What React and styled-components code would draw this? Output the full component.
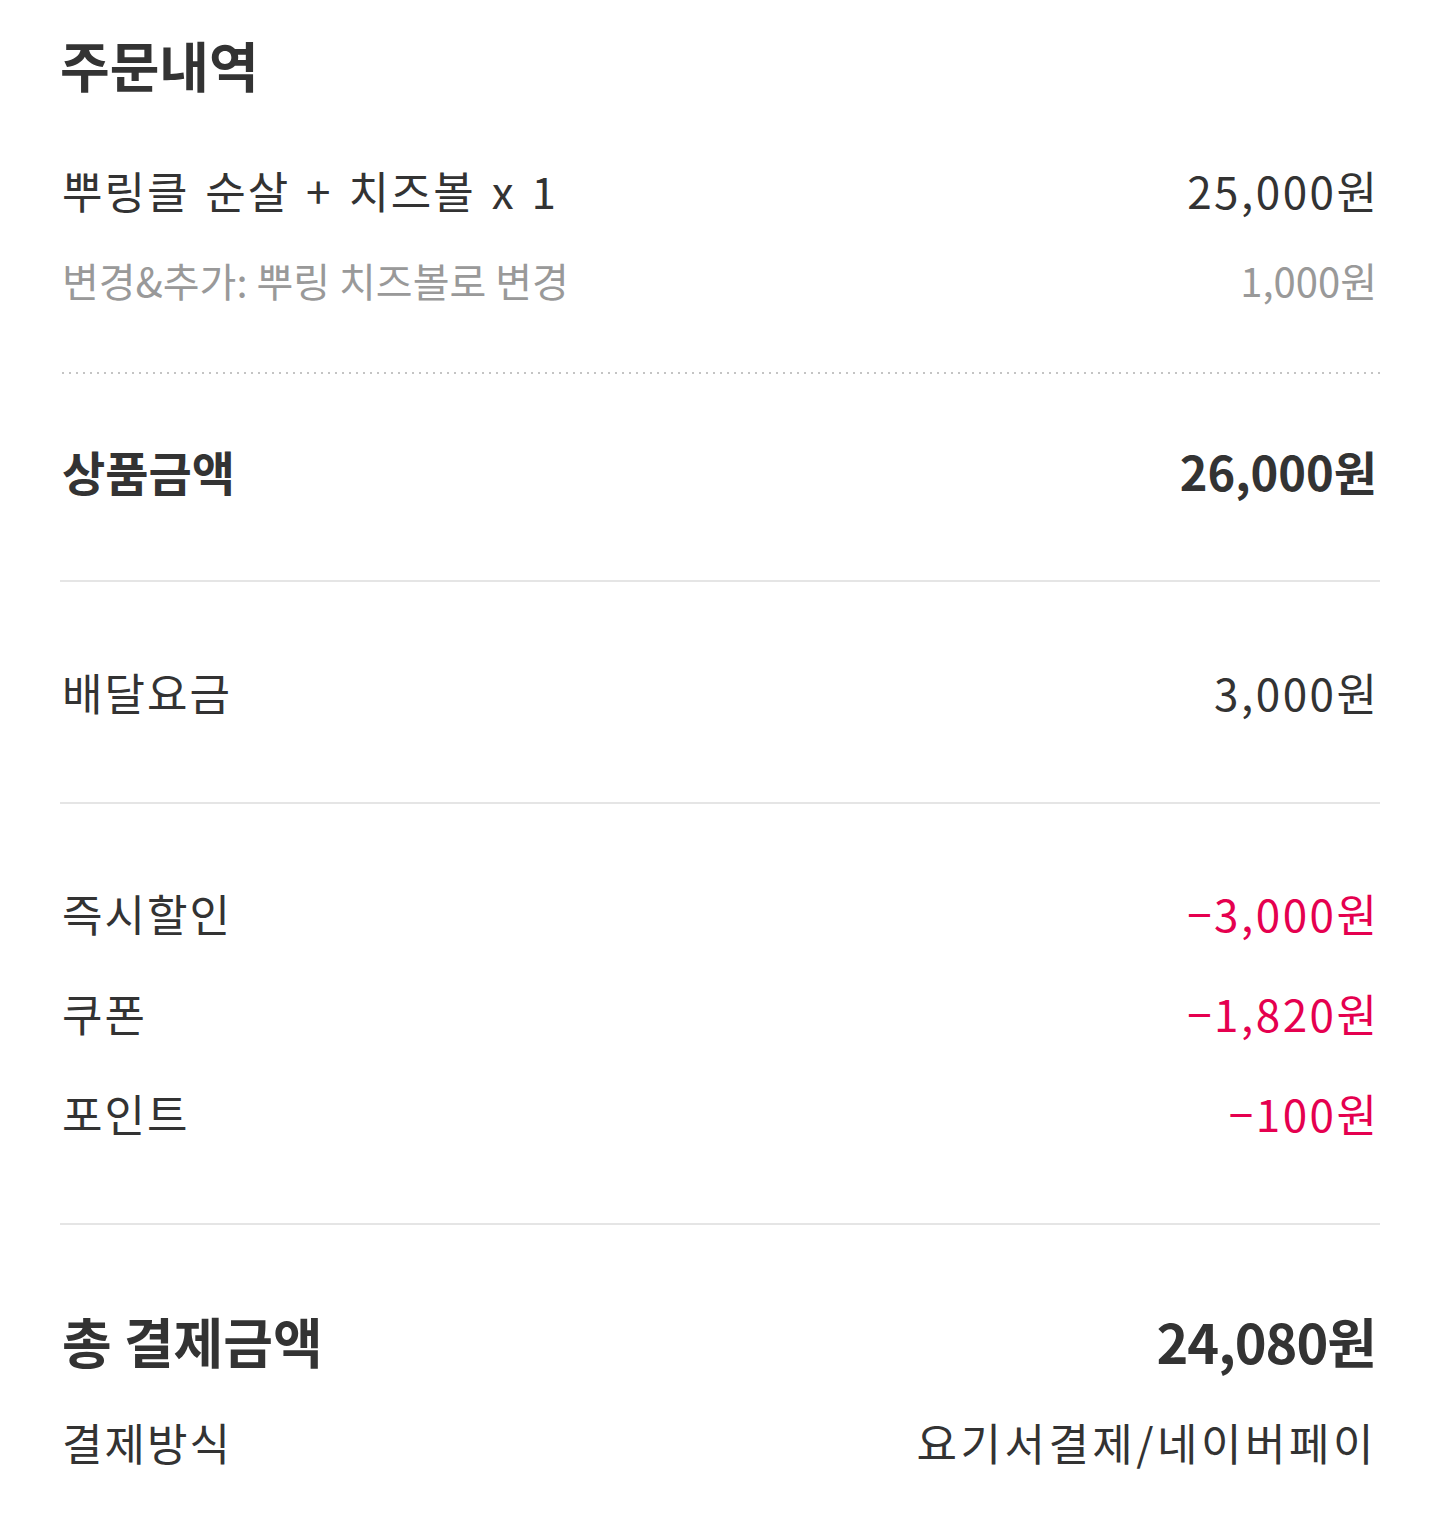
import React from 'react';
import styled, { createGlobalStyle } from 'styled-components';

const GlobalStyle = createGlobalStyle`
  body {
    margin:0;
    background:#fff;
    font-family:"Noto Sans CJK KR","Noto Sans",sans-serif;
    color:#333;
  }
`

const Page = styled.div`
  width:100%;
  padding:25px 60px 20px;
  box-sizing:border-box;
`

const Title = styled.h1`
  margin:0;
  font-size:54px;
  font-weight:700;
  line-height:80px;
  color:#333;
`

const Section = styled.div`
  padding:${({pad})=> pad || '0'};
`

const Row = styled.div`
  display:flex;
  justify-content:space-between;
  align-items:center;
  height:${({h})=> h || 100}px;
  font-size:${({size})=> size || 44}px;
  font-weight:${({bold})=> bold ? 700 : 400};
  color:${({muted})=> muted ? '#999' : '#333'};
  padding:0 3px 0 2px;
`

const Label = styled.span`
  letter-spacing:${({spacing})=> spacing || 0}px;
  word-spacing:${({words})=> words || 0}px;
`

const Price = styled.span`
  color:${({minus})=> minus ? '#e5004f' : 'inherit'};
  letter-spacing:${({spacing})=> spacing ?? 2.5}px;
  margin-right:${({spacing})=> -(spacing ?? 2.5)}px;
`

const Dotted = styled.div`
  height:2px;
  margin-left:2px;
  background-image:linear-gradient(to right,#c4c4c4 2px,transparent 2px);
  background-size:7px 2px;
`

const Divider = styled.div`
  height:2px;
  background:#e5e5e5;
`

const discounts = [
  {label:'즉시할인', value:'−3,000원'},
  {label:'쿠폰', value:'−1,820원'},
  {label:'포인트', value:'−100원'},
]

const App =()=>{
  return(
    <Page>
      <GlobalStyle/>
      <Title>주문내역</Title>
      <Section pad="40px 0 47px">
        <Row h={90}>
          <Label spacing={2} words={4}>뿌링클 순살 + 치즈볼 x 1</Label>
          <Price>25,000원</Price>
        </Row>
        <Row h={90} size={40} muted>
          <Label>변경&amp;추가: 뿌링 치즈볼로 변경</Label>
          <Price spacing={0}>1,000원</Price>
        </Row>
      </Section>
      <Dotted/>
      <Section pad="46px 0 60px">
        <Row bold size={47}>
          <Label>상품금액</Label>
          <Price spacing={0}>26,000원</Price>
        </Row>
      </Section>
      <Divider/>
      <Section pad="60px 0 60px">
        <Row>
          <Label spacing={2}>배달요금</Label>
          <Price>3,000원</Price>
        </Row>
      </Section>
      <Divider/>
      <Section pad="59px 0 60px">
        {discounts.map(d=>(
          <Row key={d.label}>
            <Label spacing={2}>{d.label}</Label>
            <Price minus>{d.value}</Price>
          </Row>
        ))}
      </Section>
      <Divider/>
      <Section pad="65px 0 0">
        <Row bold size={54}>
          <Label>총 결제금액</Label>
          <Price spacing={-1}>24,080원</Price>
        </Row>
        <Row h={104}>
          <Label spacing={2}>결제방식</Label>
          <Label spacing={3.5}>요기서결제/네이버페이</Label>
        </Row>
      </Section>
    </Page>
  )
}

export default App
